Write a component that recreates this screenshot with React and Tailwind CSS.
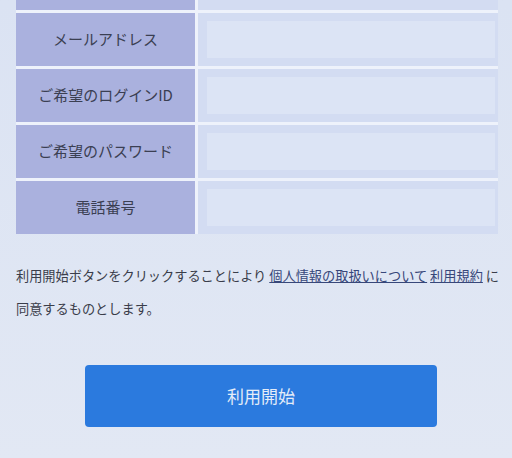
import React from "react";

const rows = ["メールアドレス", "ご希望のログインID", "ご希望のパスワード", "電話番号"];

export default function App() {
  return (
    <div
      className="w-[512px] h-[458px] overflow-hidden bg-gradient-to-b from-[#dbe3f3] to-[#e2e8f4] text-[#3a3d4a]"
      style={{ fontFamily: '"Noto Sans CJK JP", "Noto Sans", sans-serif' }}
    >
      <div className="pl-4 pr-[14px]">
        <div className="grid grid-cols-[179px_1fr] gap-x-[3px] gap-y-[3px] bg-[#eef2fb]">
          <div className="h-[10px] bg-[#aab1de]" />
          <div className="h-[10px] bg-[#d3dcf2]" />
          {rows.map((r) => (
            <React.Fragment key={r}>
              <div className="h-[53px] bg-[#aab1de] flex items-center justify-center text-[15px] text-[#3b3f52]">
                {r}
              </div>
              <div className="h-[53px] bg-[#d3dcf2] pl-[9px] pr-[3px] py-[8px]">
                <div className="h-full bg-[#dce4f5]" />
              </div>
            </React.Fragment>
          ))}
        </div>
      </div>
      <div className="pl-4 pr-3 mt-[25px] text-[13.2px] leading-[33px] text-[#3a3d4a]">
        利用開始ボタンをクリックすることにより{" "}
        <span className="underline text-[#37477a]">個人情報の取扱いについて</span>{" "}
        <span className="underline text-[#37477a]">利用規約</span> に
        <br />
        同意するものとします。
      </div>
      <div className="mt-[40px] flex justify-center pl-[10px]">
        <div className="w-[352px] h-[62px] rounded-[4px] bg-[#2b7ade] flex items-center justify-center text-[17px] text-[#e4ecf8]">
          利用開始
        </div>
      </div>
    </div>
  );
}
